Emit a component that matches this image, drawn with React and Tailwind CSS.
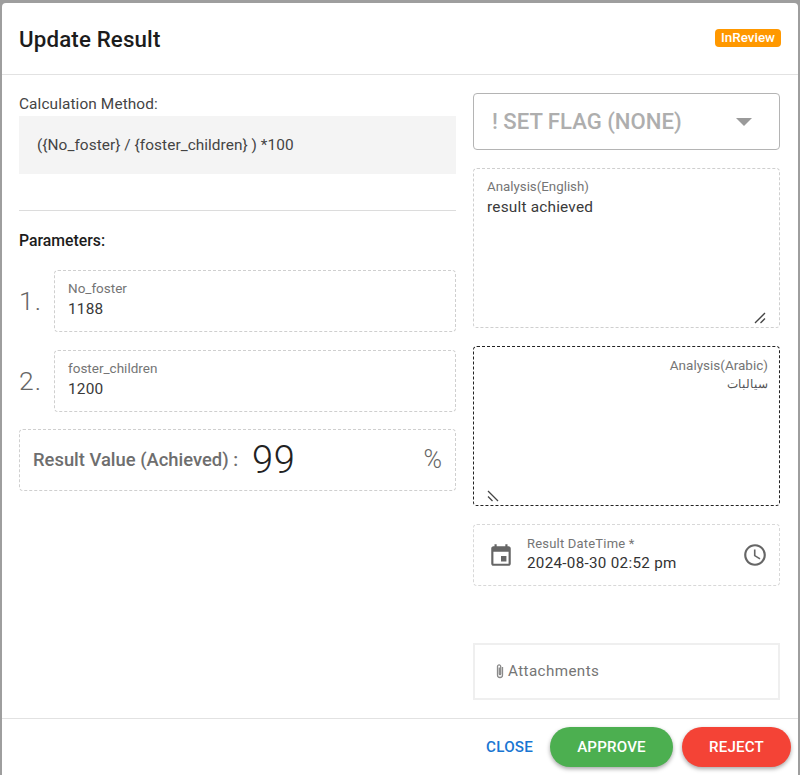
function Field({ label, value, className = '' }) {
  return (
    <div className={`rounded border border-dashed border-[#cfcfcf] px-[13px] pt-[8px] ${className}`}>
      <div className="text-[13.5px] leading-[18px] text-[#757575]">{label}</div>
      <div className="mt-[2px] text-[15.4px] leading-[21px] tracking-[0.2px] text-[#3a3a3a]">{value}</div>
    </div>
  )
}

function ResizeGrip({ className = '' }) {
  return (
    <svg className={`absolute ${className}`} width="12" height="12" viewBox="0 0 12 12" fill="none" stroke="#444" strokeWidth="1.3">
      <path d="M1 11L11 1" />
      <path d="M6.5 11L11 6.5" />
    </svg>
  )
}

export default function App() {
  return (
    <div className="h-[775px] overflow-hidden bg-[#9e9e9e] pt-[3px] pl-[2px] pr-[2px] font-['Roboto',sans-serif]">
      <div className="flex h-[772px] flex-col rounded-t bg-white">
        {/* Header */}
        <div className="flex h-[72px] shrink-0 items-center justify-between border-b border-[#e2e2e2] pl-[17px] pr-[17px]">
          <h2 className="text-[22.3px] font-medium leading-[30px] tracking-[0.15px] text-[#1c1c1c]">Update Result</h2>
          <span className="mb-[2px] rounded-[4px] bg-[#ff9800] px-[6px] text-[13.4px] font-medium leading-[18px] text-white">InReview</span>
        </div>

        {/* Body */}
        <div className="flex min-h-0 flex-1 gap-[17px] pl-[17px] pr-[18px]">
          <div className="flex w-[437px] flex-col">
            <div className="mt-[19px] text-[15.4px] leading-[21px] tracking-[0.1px] text-[#444]">Calculation Method:</div>
            <div className="mt-[1px] h-[58px] bg-[#f4f4f4] pl-[18px] pt-[19px] text-[15.4px] leading-[21px] tracking-[0.05px] text-[#444]">
              {'({No_foster} / {foster_children} ) *100'}
            </div>
            <div className="mt-[36px] border-t border-[#dcdcdc]" />
            <div className="mt-[20px] text-[15.8px] font-medium leading-[20px] text-[#1c1c1c]">Parameters:</div>

            <div className="mt-[19px] flex items-center">
              <span className="w-[35px] text-[26.5px] font-light leading-[36px] tracking-[1px] text-[#666]">1.</span>
              <Field className="h-[62px] flex-1" label="No_foster" value="1188" />
            </div>
            <div className="mt-[18px] flex items-center">
              <span className="w-[35px] text-[26.5px] font-light leading-[36px] tracking-[1px] text-[#666]">2.</span>
              <Field className="h-[62px] flex-1" label="foster_children" value="1200" />
            </div>

            <div className="mt-[17px] flex h-[62px] items-center rounded border border-dashed border-[#cfcfcf] pl-[13px] pr-[13px]">
              <span className="text-[18.4px] font-medium leading-[24px] text-[#6e6e6e]">Result Value (Achieved) :</span>
              <span className="ml-[14px] text-[38px] font-light leading-[44px] tracking-[0.5px] text-[#222]">99</span>
              <span className="ml-auto text-[25px] font-light leading-[32px] text-[#666]">%</span>
            </div>
          </div>

          <div className="flex w-[307px] flex-col">
            <div className="mt-[18px] flex h-[57px] items-center justify-between rounded border border-[#b4b4b4] pl-[18px] pr-[27px]">
              <span className="pb-[2px] text-[22.1px] font-medium leading-[36px] text-[#aeaeae]">! SET FLAG (NONE)</span>
              <svg width="16" height="8" viewBox="0 0 16 8"><path d="M0 0h16L8 8z" fill="#9a9a9a" /></svg>
            </div>

            <div className="relative mt-[18px] h-[160px] rounded border border-dashed border-[#cfcfcf] px-[13px] pt-[9px]">
              <div className="text-[13.3px] leading-[18px] text-[#757575]">Analysis(English)</div>
              <div className="mt-[1px] text-[15.4px] leading-[21px] tracking-[0.2px] text-[#3a3a3a]">result achieved</div>
              <ResizeGrip className="bottom-[3px] right-[13px]" />
            </div>

            <div dir="rtl" className="relative mt-[18px] h-[160px] rounded border border-dashed border-[#222] px-[11px] pt-[9px]">
              <div className="text-[13.5px] leading-[18px] text-[#757575]">Analysis(Arabic)</div>
              <div className="text-[11.5px] leading-[21px] text-[#555]">سيالبات</div>
              <ResizeGrip className="bottom-[3px] left-[13px] -scale-x-100" />
            </div>

            <div className="mt-[18px] flex h-[62px] items-center rounded border border-dashed border-[#d8d8d8] pl-[14px] pr-[11px]">
              <svg width="26" height="26" viewBox="0 0 24 24" fill="#666">
                <path d="M19 4h-1V2h-2v2H8V2H6v2H5c-1.11 0-2 .9-2 2v14c0 1.1.89 2 2 2h14c1.1 0 2-.9 2-2V6c0-1.1-.9-2-2-2zm0 16H5V9h14v11zM12 13h5v5h-5z" />
              </svg>
              <div className="ml-[13px] pb-[2px]">
                <div className="text-[13px] leading-[18px] tracking-[0.2px] text-[#757575]">Result DateTime *</div>
                <div className="text-[15.2px] leading-[21px] tracking-[0.3px] text-[#333]">2024-08-30 02:52 pm</div>
              </div>
              <svg className="ml-auto" width="26" height="26" viewBox="0 0 24 24" fill="#666">
                <path d="M11.99 2C6.47 2 2 6.48 2 12s4.47 10 9.99 10C17.52 22 22 17.52 22 12S17.52 2 11.99 2zM12 20c-4.42 0-8-3.58-8-8s3.58-8 8-8 8 3.58 8 8-3.58 8-8 8zm.5-13H11v6l5.25 3.15.75-1.23-4.5-2.67z" />
              </svg>
            </div>

            <div className="mt-[57px] flex h-[57px] items-center border-2 border-[#efefef] pb-[2px] pl-[19px]">
              <svg width="12" height="16" viewBox="0 0 12 16" fill="none" stroke="#8a8a8a" strokeWidth="1.3">
                <path d="M8.5 4v8a2.5 2.5 0 0 1-5 0V3.5a1.6 1.6 0 0 1 3.2 0V11a.7.7 0 0 1-1.4 0V4.5" />
              </svg>
              <span className="ml-[2px] text-[15.2px] leading-[22px] tracking-[0.4px] text-[#757575]">Attachments</span>
            </div>
          </div>
        </div>

        {/* Footer */}
        <div className="flex h-[57px] shrink-0 items-center justify-end gap-[17px] border-t border-[#e2e2e2] pr-[7px]">
          <button className="text-[15.2px] font-medium tracking-[0.2px] text-[#1976d2]">CLOSE</button>
          <div className="flex items-center gap-[9px]">
            <button className="h-[40px] w-[123px] rounded-full bg-[#4caf50] text-[15.1px] font-medium tracking-[0.2px] text-white shadow-[0_2px_4px_rgba(0,0,0,0.35)]">APPROVE</button>
            <button className="h-[40px] w-[109px] rounded-full bg-[#f44336] text-[15.1px] font-medium tracking-[0.2px] text-white shadow-[0_2px_4px_rgba(0,0,0,0.35)]">REJECT</button>
          </div>
        </div>
      </div>
    </div>
  )
}
